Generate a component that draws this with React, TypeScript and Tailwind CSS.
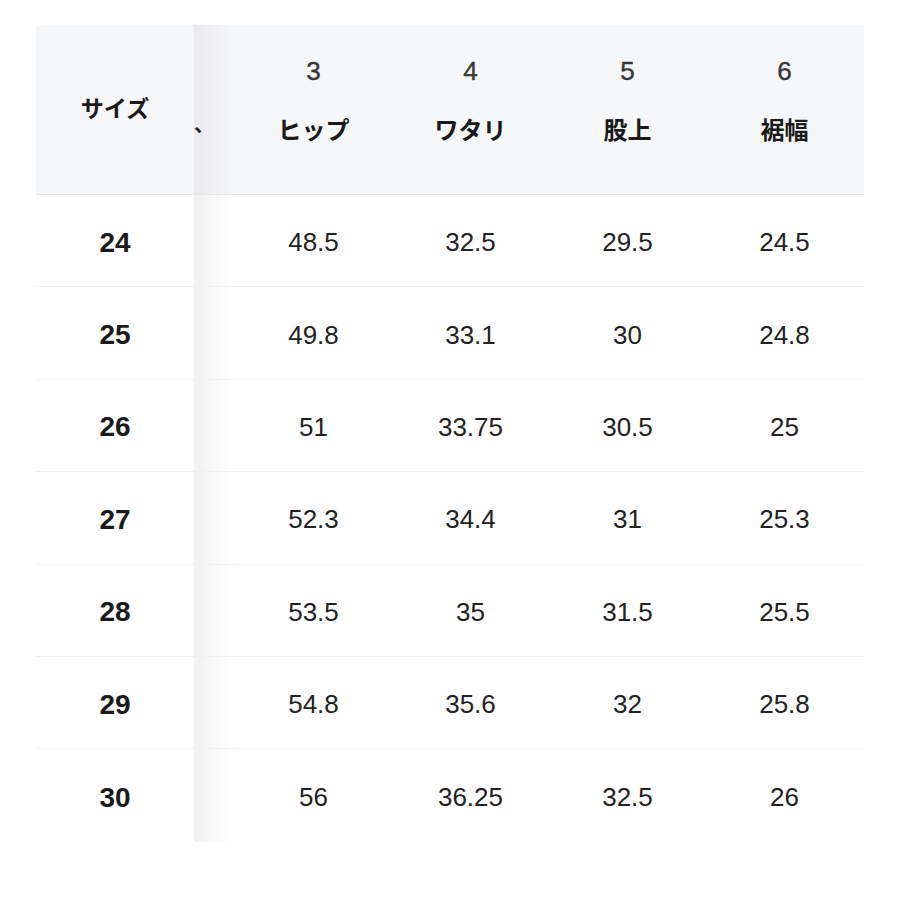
import React from "react";

const cols = [
  { n: "3", label: "ヒップ" },
  { n: "4", label: "ワタリ" },
  { n: "5", label: "股上" },
  { n: "6", label: "裾幅" },
];

const rows: [string, string, string, string, string][] = [
  ["24", "48.5", "32.5", "29.5", "24.5"],
  ["25", "49.8", "33.1", "30", "24.8"],
  ["26", "51", "33.75", "30.5", "25"],
  ["27", "52.3", "34.4", "31", "25.3"],
  ["28", "53.5", "35", "31.5", "25.5"],
  ["29", "54.8", "35.6", "32", "25.8"],
  ["30", "56", "36.25", "32.5", "26"],
];

const font = {
  fontFamily: '"Liberation Sans", "Noto Sans CJK JP", sans-serif',
};

export default function App() {
  return (
    <div className="w-[900px] h-[900px] bg-white pt-[25px] pl-[36px]" style={font}>
      <div className="w-[828px]">
        <div className="grid grid-cols-[158px_41px_157px_157px_157px_157px] h-[170px] bg-[#f6f7f9] border-b border-[#e6e6e9]">
          <div className="flex items-center justify-center text-[23px] font-bold text-[#1a1a1a]">
            サイズ
          </div>
          <div className="bg-[linear-gradient(to_right,#eaeaed,#f6f7f900)] flex items-center pl-[0px] pt-[30px] text-[20px] font-bold text-[#1a1a1a]">
            、
          </div>
          {cols.map((c) => (
            <div key={c.n} className="flex flex-col items-center justify-start pt-[31px]">
              <div className="text-[26px] leading-[30px] text-[#383838] [-webkit-text-stroke:0.4px_#383838]">{c.n}</div>
              <div className="mt-[31px] text-[24px] leading-[28px] font-bold text-[#1a1a1a]">{c.label}</div>
            </div>
          ))}
        </div>
        {rows.map((r, i) => (
          <div
            key={r[0]}
            className={
              "grid grid-cols-[158px_41px_157px_157px_157px_157px] h-[92.4px] " +
              (i < rows.length - 1 ? "border-b border-[#f1f1f1]" : "")
            }
          >
            <div className="flex items-center justify-center text-[28px] font-bold text-[#1a1a1a] pt-[4px]">
              {r[0]}
            </div>
            <div className="bg-[linear-gradient(to_right,#f1f1f1,#ffffff00)]" />
            {r.slice(1).map((v, j) => (
              <div key={j} className="flex items-center justify-center text-[26px] text-[#222222] pt-[4px]">
                {v}
              </div>
            ))}
          </div>
        ))}
      </div>
    </div>
  );
}
